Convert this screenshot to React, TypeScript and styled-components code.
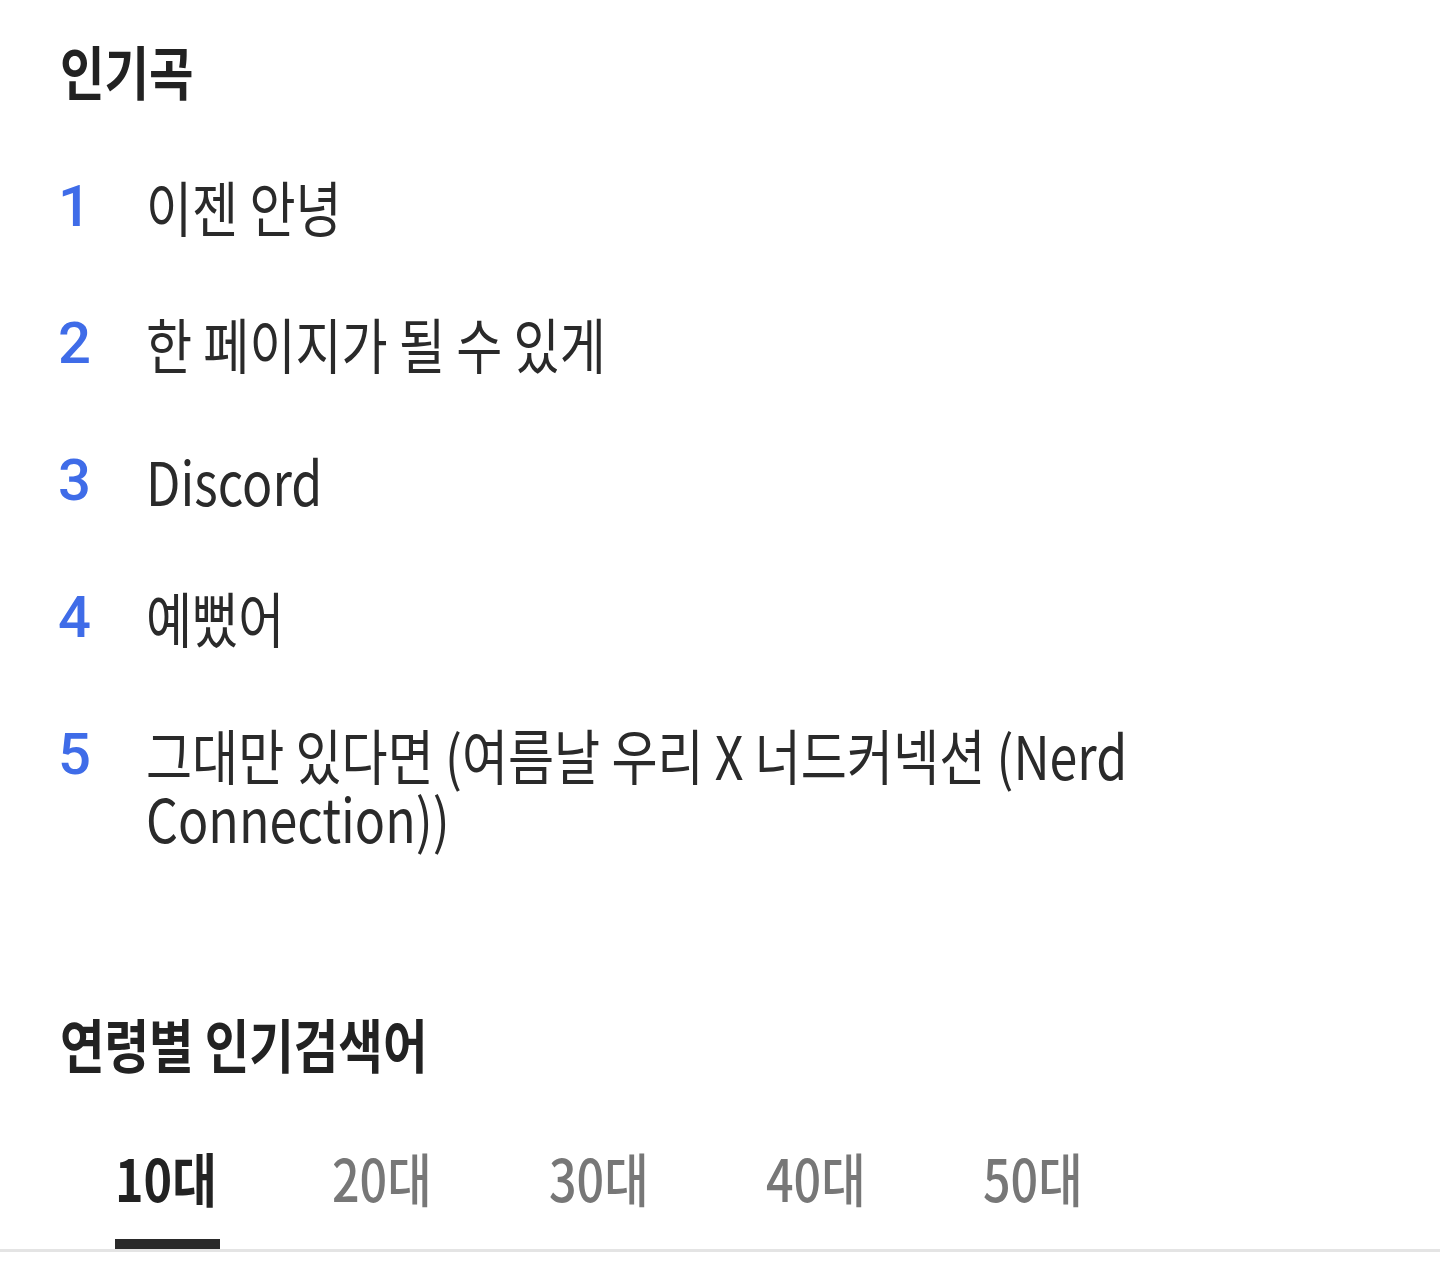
import React from "react";
import styled, { createGlobalStyle } from "styled-components";

const SCALE = 0.835;

const GlobalStyle = createGlobalStyle`
  html, body {
    margin: 0;
    padding: 0;
    background: #ffffff;
    overflow-x: hidden;
  }
  body {
    font-family: "Noto Sans CJK KR", "Noto Sans", sans-serif;
    color: #262626;
  }
`;

const Page = styled.div`
  width: 1440px;
  height: 1274px;
  overflow: hidden;
  background: #fff;
  display: flex;
  flex-direction: column;
`;

const Section = styled.section`
  padding: 0 60px;
  display: flex;
  flex-direction: column;
`;

const Condensed = styled.span<{ $w?: number }>`
  display: inline-block;
  transform: scaleX(${SCALE});
  transform-origin: left center;
  white-space: ${(p) => (p.$w ? "normal" : "nowrap")};
  ${(p) => (p.$w ? `width: ${p.$w}px;` : "")}
`;

const Heading = styled.h2<{ $top: number }>`
  margin: ${(p) => p.$top}px 0 0 0;
  font-size: 58px;
  font-weight: 700;
  line-height: 80px;
  height: 80px;
  color: #222;
  letter-spacing: 0;
`;

const List = styled.ol`
  list-style: none;
  margin: 27px 0 0 0;
  padding: 0;
  display: flex;
  flex-direction: column;
`;

const Item = styled.li`
  display: flex;
  align-items: flex-start;
  padding: 37px 0;
  font-size: 60px;
  line-height: 63px;
  font-weight: 400;
`;

const Rank = styled.div`
  width: 88px;
  height: 63px;
  flex: none;
  color: #3f6ce8;
  font-family: Roboto, "Noto Sans", sans-serif;
  font-size: 58px;
  line-height: 61px;
  font-weight: 500;
  margin-left: -2px;
  margin-right: 2px;
  padding-top: 2px;
  box-sizing: border-box;
`;

const Title = styled.div`
  flex: 1;
  min-width: 0;
  color: #2a2a2a;
  margin-left: -2px;
`;

const Tabs = styled.div`
  margin-top: 54px;
  display: flex;
  padding: 0 0 0 59px;
  border-bottom: 3px solid #e4e4e4;
`;

const Tab = styled.div<{ $active?: boolean }>`
  width: 217px;
  display: flex;
  flex-direction: column;
  align-items: center;
  font-size: 58px;
  line-height: 80px;
  font-weight: ${(p) => (p.$active ? 700 : 500)};
  color: ${(p) => (p.$active ? "#222" : "#777")};
`;

const TabLabel = styled.div`
  width: 105px;
  display: flex;
  justify-content: flex-start;
`;

const Bar = styled.div<{ $active?: boolean }>`
  margin-top: 22px;
  width: 105px;
  height: 10px;
  background: ${(p) => (p.$active ? "#2a2a2a" : "transparent")};
`;

const songs = [
  "이젠 안녕",
  "한 페이지가 될 수 있게",
  "Discord",
  "예뻤어",
  "그대만 있다면 (여름날 우리 X 너드커넥션 (Nerd Connection))",
];

const ages = ["10대", "20대", "30대", "40대", "50대"];

export default function App() {
  return (
    <Page>
      <GlobalStyle />
      <Section>
        <Heading $top={30}>
          <Condensed>인기곡</Condensed>
        </Heading>
        <List>
          {songs.map((s, i) => (
            <Item key={s}>
              <Rank>{i + 1}</Rank>
              <Title>
                <Condensed $w={i === 4 ? 1478 : undefined}>{s}</Condensed>
              </Title>
            </Item>
          ))}
        </List>
        <Heading $top={118}>
          <Condensed>연령별 인기검색어</Condensed>
        </Heading>
      </Section>
      <Tabs>
        {ages.map((a, i) => (
          <Tab key={a} $active={i === 0}>
            <TabLabel>
              <Condensed>{a}</Condensed>
            </TabLabel>
            <Bar $active={i === 0} />
          </Tab>
        ))}
      </Tabs>
    </Page>
  );
}
